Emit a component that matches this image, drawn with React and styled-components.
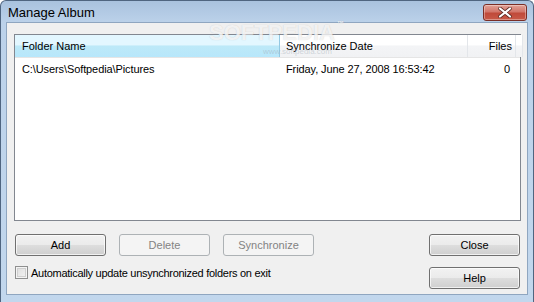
import React from "react";
import styled, { createGlobalStyle } from "styled-components";

const Global = createGlobalStyle`
  html, body { margin: 0; padding: 0; background: #ffffff; }
  body { font-family: "Liberation Sans", Arial, sans-serif; font-size: 11px; color: #000; }
  * { box-sizing: border-box; }
`;

const Window = styled.div`
  position: relative;
  width: 534px;
  height: 302px;
  display: flex;
  flex-direction: column;
  border: 1px solid #4f6580;
  border-bottom: none;
  border-radius: 6px 6px 0 0;
  background: linear-gradient(#a9c2de 0px, #bcd2ea 22px, #c2d7ed 100%);
  padding: 0 5px 7px 5px;
  overflow: hidden;
`;

const TitleBar = styled.div`
  height: 21px;
  display: flex;
  align-items: center;
  justify-content: space-between;
  padding-left: 2px;
`;

const Title = styled.div`
  font-family: "Liberation Sans", Arial, sans-serif;
  font-size: 13px;
  color: #000;
  padding-top: 2px;
`;

const CloseBox = styled.div`
  width: 44px;
  height: 17px;
  margin-top: 2px;
  margin-right: 1px;
  border: 1px solid #7a2e26;
  border-radius: 3px;
  background: linear-gradient(#e2a196 0%, #d2766a 45%, #c04a3a 55%, #c85a48 100%);
  box-shadow: inset 0 0 0 1px rgba(255, 255, 255, 0.35);
  display: flex;
  align-items: center;
  justify-content: center;
`;

const Client = styled.div`
  flex: 1;
  background: #f0f0f0;
  border: 1px solid #8fa6c0;
  padding: 11px 6px 0 7px;
  display: flex;
  flex-direction: column;
`;

const List = styled.div`
  height: 187px;
  border: 1px solid #828790;
  background: #fff;
  display: flex;
  flex-direction: column;
`;

const HeaderRow = styled.div`
  display: flex;
  height: 23px;
  border-bottom: 1px solid #e5e5e5;
`;

const HeadCell = styled.div`
  width: ${(p) => p.$w}px;
  flex: ${(p) => (p.$grow ? 1 : "none")};
  display: flex;
  align-items: center;
  justify-content: ${(p) => (p.$right ? "flex-end" : "flex-start")};
  padding: 0 ${(p) => (p.$right ? 3 : 0)}px 0 ${(p) => p.$pl || 6}px;
  border-right: 1px solid ${(p) => (p.$hot ? "#93c9e3" : "#e3e6ea")};
  background: ${(p) =>
    p.$hot
      ? "linear-gradient(#e3f7ff 0%, #e3f7ff 45%, #bde9f8 50%, #b7e7fb 100%)"
      : "linear-gradient(#ffffff 0%, #ffffff 45%, #f3f4f6 50%, #f1f2f4 100%)"};
  white-space: nowrap;
`;

const Row = styled.div`
  display: flex;
  height: 19px;
  align-items: center;
  margin-top: 1px;
`;

const Cell = styled.div`
  width: ${(p) => p.$w}px;
  flex: ${(p) => (p.$grow ? 1 : "none")};
  padding: 0 ${(p) => (p.$right ? 6 : 0)}px 0 ${(p) => p.$pl || 6}px;
  text-align: ${(p) => (p.$right ? "right" : "left")};
  letter-spacing: -0.1px;
  white-space: nowrap;
`;

const Bottom = styled.div`
  display: flex;
  justify-content: space-between;
  margin-top: 13px;
`;

const LeftCol = styled.div`
  display: flex;
  flex-direction: column;
  gap: 10px;
  padding-left: 1px;
`;

const ButtonRow = styled.div`
  display: flex;
  gap: 13px;
`;

const RightCol = styled.div`
  display: flex;
  flex-direction: column;
  gap: 11px;
  padding-right: 1px;
`;

const Button = styled.button`
  width: 91px;
  height: 22px;
  font-family: "Liberation Sans", Arial, sans-serif;
  font-size: 11px;
  border-radius: 3px;
  padding: 0;
  border: 1px solid ${(p) => (p.disabled ? "#adb2b5" : "#707070")};
  color: ${(p) => (p.disabled ? "#838383" : "#000")};
  background: ${(p) =>
    p.disabled
      ? "#f4f4f4"
      : "linear-gradient(#f2f2f2 0%, #ebebeb 48%, #dddddd 52%, #cfcfcf 100%)"};
  box-shadow: ${(p) => (p.disabled ? "none" : "inset 0 0 0 1px rgba(255,255,255,0.7)")};
`;

const CheckLine = styled.label`
  display: flex;
  align-items: center;
  gap: 3px;
  height: 13px;
  letter-spacing: -0.28px;
`;

const CheckBox = styled.span`
  width: 13px;
  height: 13px;
  border: 1px solid #8e8f8f;
  background: linear-gradient(135deg, #dcdcdc 0%, #f4f4f4 100%);
  box-shadow: inset 0 0 0 1px #f4f4f4, inset 0 0 0 2px #cfcfcf;
`;

const Mark = styled.div`
  position: absolute;
  left: 208px;
  top: 19px;
  font-family: "Liberation Sans", Arial, sans-serif;
  font-weight: bold;
  font-size: 22px;
  color: rgba(255, 255, 255, 0.75);
  text-shadow: 0 0 1px rgba(120, 120, 120, 0.35);
  pointer-events: none;
`;

const Tm = styled.span`
  font-size: 7px;
  vertical-align: top;
  margin-left: 2px;
`;

const Url = styled.div`
  position: absolute;
  left: 262px;
  top: 46px;
  font-family: "Liberation Sans", Arial, sans-serif;
  font-size: 8px;
  color: rgba(160, 170, 180, 0.45);
  pointer-events: none;
`;

export default function App() {
  return (
    <>
      <Global />
      <Window>
        <TitleBar>
          <Title>Manage Album</Title>
          <CloseBox>
            <svg width="16" height="11" viewBox="0 0 16 11">
              <path d="M3 1.5 L13 9.5 M13 1.5 L3 9.5" stroke="#5a2a24" strokeWidth="3.6" strokeLinecap="round" />
              <path d="M3 1.5 L13 9.5 M13 1.5 L3 9.5" stroke="#ffffff" strokeWidth="2.2" strokeLinecap="round" />
            </svg>
          </CloseBox>
        </TitleBar>
        <Client>
          <List>
            <HeaderRow>
              <HeadCell $w={265} $hot $pl={7}>Folder Name</HeadCell>
              <HeadCell $w={188}>Synchronize Date</HeadCell>
              <HeadCell $w={48} $right>Files</HeadCell>
              <HeadCell $grow />
            </HeaderRow>
            <Row>
              <Cell $w={265} $pl={7}>C:\Users\Softpedia\Pictures</Cell>
              <Cell $w={188}>Friday, June 27, 2008 16:53:42</Cell>
              <Cell $w={48} $right>0</Cell>
            </Row>
          </List>
          <Bottom>
            <LeftCol>
              <ButtonRow>
                <Button>Add</Button>
                <Button disabled>Delete</Button>
                <Button disabled>Synchronize</Button>
              </ButtonRow>
              <CheckLine>
                <CheckBox />
                Automatically update unsynchronized folders on exit
              </CheckLine>
            </LeftCol>
            <RightCol>
              <Button>Close</Button>
              <Button>Help</Button>
            </RightCol>
          </Bottom>
        </Client>
        <Mark>
          SOFTPEDIA<Tm>™</Tm>
        </Mark>
        <Url>www.softpedia.com</Url>
      </Window>
    </>
  );
}
